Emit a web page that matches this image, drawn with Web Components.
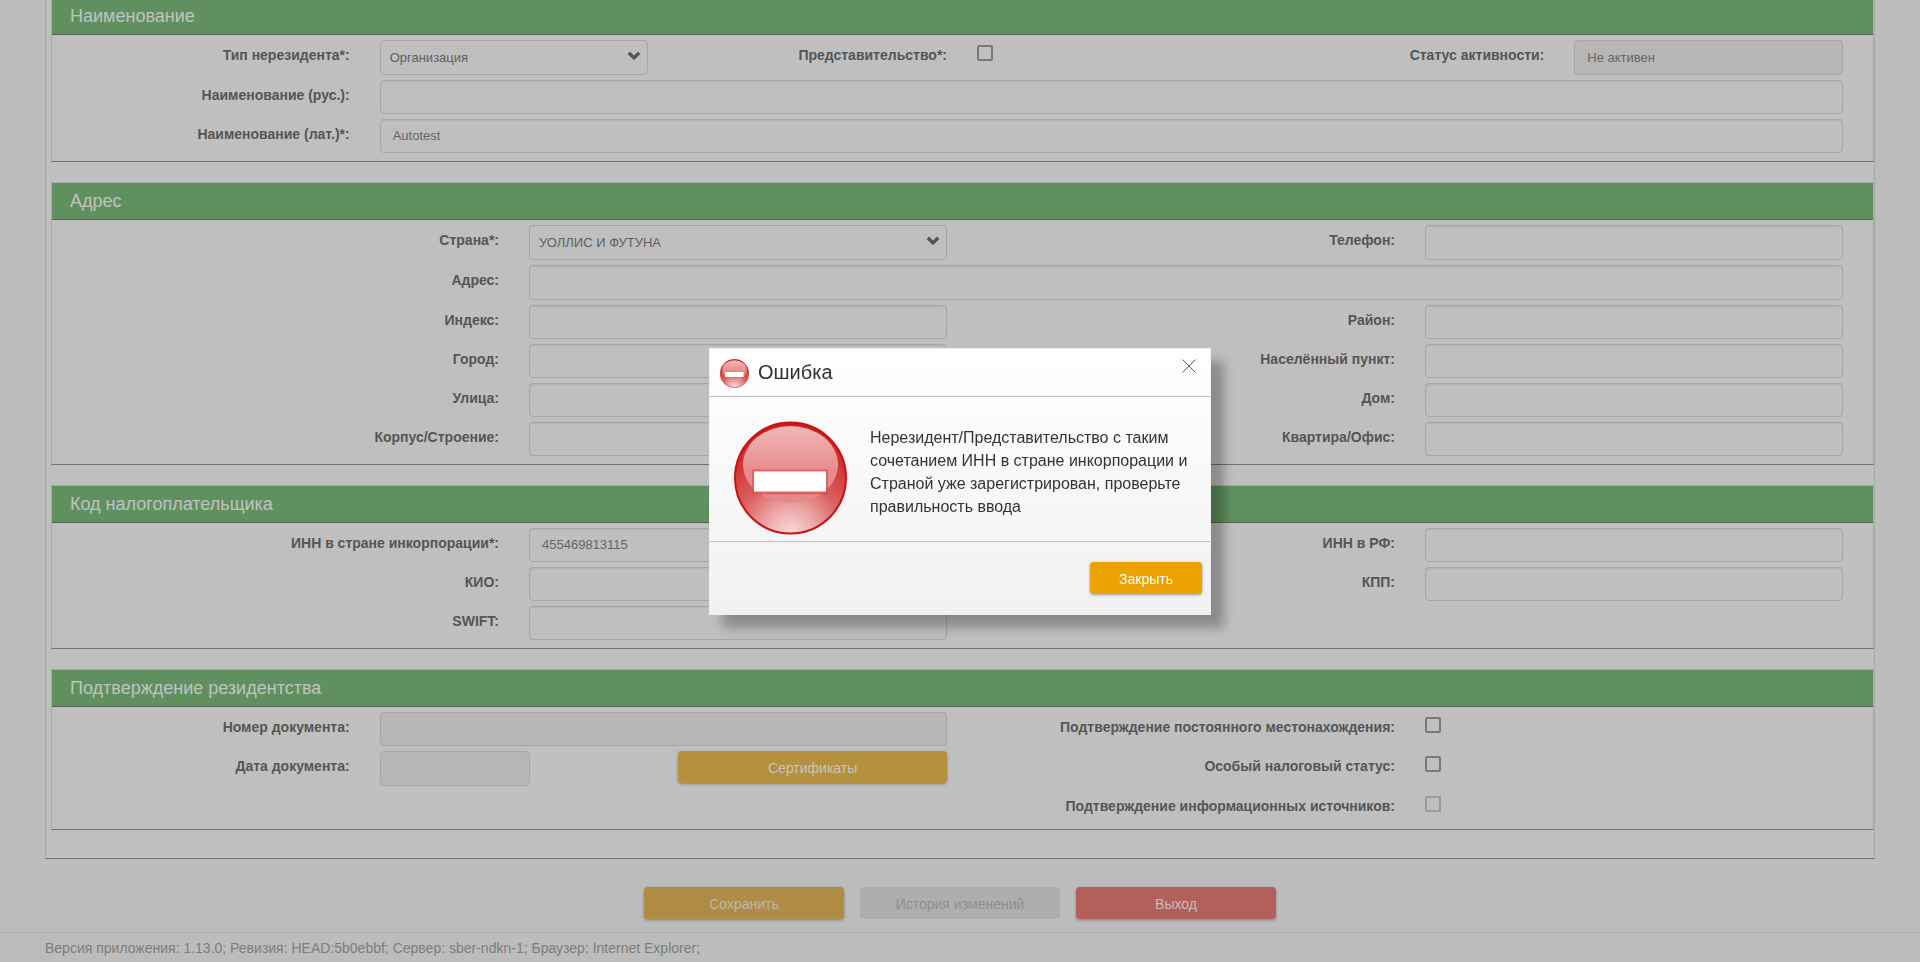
<!DOCTYPE html>
<html lang="ru">
<head>
<meta charset="utf-8">
<title>Карточка нерезидента</title>
<style>
  html, body { margin: 0; min-height: 100%; }
  body {
    background: #bcbcbc; color: #555;
    font: 14px/20px "Liberation Sans", Arial, sans-serif;
    overflow: hidden;
  }
</style>
</head>
<body>
<nr-page>
  <nr-section heading="Наименование">
    <nr-row tall>
      <nr-select label="Тип нерезидента*" value="Организация"></nr-select>
      <nr-check label="Представительство*"></nr-check>
      <nr-input label="Статус активности" value="Не активен" disabled></nr-input>
    </nr-row>
    <nr-row><nr-input label="Наименование (рус.)" span="2 10"></nr-input></nr-row>
    <nr-row><nr-input label="Наименование (лат.)*" span="2 10" value="Autotest"></nr-input></nr-row>
  </nr-section>

  <nr-section heading="Адрес">
    <nr-row tall>
      <nr-select label="Страна*" span="3 3" value="УОЛЛИС И ФУТУНА"></nr-select>
      <nr-input label="Телефон" span="3 3"></nr-input>
    </nr-row>
    <nr-row tall><nr-input label="Адрес" span="3 9"></nr-input></nr-row>
    <nr-row><nr-input label="Индекс" span="3 3"></nr-input><nr-input label="Район" span="3 3"></nr-input></nr-row>
    <nr-row><nr-input label="Город" span="3 3"></nr-input><nr-input label="Населённый пункт" span="3 3"></nr-input></nr-row>
    <nr-row><nr-input label="Улица" span="3 3"></nr-input><nr-input label="Дом" span="3 3"></nr-input></nr-row>
    <nr-row><nr-input label="Корпус/Строение" span="3 3"></nr-input><nr-input label="Квартира/Офис" span="3 3"></nr-input></nr-row>
  </nr-section>

  <nr-section heading="Код налогоплательщика">
    <nr-row><nr-input label="ИНН в стране инкорпорации*" span="3 3" value="455469813115"></nr-input><nr-input label="ИНН в РФ" span="3 3"></nr-input></nr-row>
    <nr-row><nr-input label="КИО" span="3 3"></nr-input><nr-input label="КПП" span="3 3"></nr-input></nr-row>
    <nr-row><nr-input label="SWIFT" span="3 3"></nr-input></nr-row>
  </nr-section>

  <nr-section heading="Подтверждение резидентства">
    <nr-row>
      <nr-input label="Номер документа" span="2 4" disabled></nr-input>
      <nr-check label="Подтверждение постоянного местонахождения" span="3 3"></nr-check>
    </nr-row>
    <nr-row tall>
      <nr-input label="Дата документа" span="2 2" disabled short></nr-input>
      <nr-button kind="certs" style="grid-column: span 2">Сертификаты</nr-button>
      <nr-check label="Особый налоговый статус" span="3 3"></nr-check>
    </nr-row>
    <nr-row low>
      <span style="grid-column: span 6"></span>
      <nr-check label="Подтверждение информационных источников" span="3 3" disabled></nr-check>
    </nr-row>
  </nr-section>

  <nr-button slot="actions" kind="save">Сохранить</nr-button>
  <nr-button slot="actions" kind="history" disabled>История изменений</nr-button>
  <nr-button slot="actions" kind="exit">Выход</nr-button>
  <span slot="footer">Версия приложения: 1.13.0; Ревизия: HEAD:5b0ebbf; Сервер: sber-ndkn-1; Браузер: Internet Explorer;</span>
</nr-page>

<nr-dialog heading="Ошибка">
  Нерезидент/Представительство с таким сочетанием ИНН в стране инкорпорации и Страной уже зарегистрирован, проверьте правильность ввода
  <nr-button slot="buttons" kind="close">Закрыть</nr-button>
</nr-dialog>

<script>
class Base extends HTMLElement {
  connectedCallback() {
    if (this.shadowRoot) return;
    this.attachShadow({ mode: 'open' }).innerHTML =
      '<style>*{box-sizing:border-box}' + this.css() + '</style>' + this.html();
  }
  attr(name) { return this.getAttribute(name) || ''; }
}

customElements.define('nr-page', class extends Base {
  css() { return `
    :host { display: block; }
    main {
      margin: -3px 45px 0; padding: 0 0 28px 5px;
      display: flex; flex-direction: column; gap: 20px;
      background: #bfbfbf; border: solid #a8a8a8; border-width: 0 1px 1px; border-bottom-color: #707070;
    }
    .actions { display: flex; justify-content: center; gap: 16px; margin: 28px 0 13px; }
    ::slotted([slot=actions]) { width: 200px; }
    footer { border-top: 1px solid #a8a8a8; padding: 5px 45px 4px; color: #7d7d7d; }`; }
  html() { return `<main><slot></slot></main>
    <div class="actions"><slot name="actions"></slot></div>
    <footer><slot name="footer"></slot></footer>`; }
});

customElements.define('nr-section', class extends Base {
  css() { return `
    :host { display: block; border: 1px solid #a8a8a8; border-bottom-color: #707070; }
    h2 {
      margin: 0; padding: 0 18px; background: #609060; color: #c0c2c0;
      border-bottom: 1px solid #526552; font-size: 18px; font-weight: 400; line-height: 36px;
    }
    .rows { display: flex; flex-direction: column; gap: 5px; padding: 5px 30px 8px 29px; }`; }
  html() { return `<h2>${this.attr('heading')}</h2><div class="rows"><slot></slot></div>`; }
});

customElements.define('nr-row', class extends Base {
  css() { return `
    :host { display: grid; grid-template-columns: repeat(12, minmax(0, 1fr)); column-gap: 30px; min-height: 34px; }
    :host([tall]) { min-height: 35px; }
    :host([low]) { min-height: 30px; }`; }
  html() { return '<slot></slot>'; }
});

/* A caption and its control, each spanning part of the row's twelve columns. */
class Field extends Base {
  css() {
    const [caption, control] = (this.attr('span') || '2 2').split(' ');
    return `
    :host { display: contents; }
    label { grid-column: span ${caption}; padding-top: 5px; text-align: right; font-weight: 700; white-space: nowrap; }
    .box { grid-column: span ${control}; display: grid; align-items: stretch; }
    input, select {
      width: 100%; margin: 0; padding: 0 12px; color: #666;
      font: 13px/20px "Liberation Sans", Arial, sans-serif;
      background: #bfbfbf; border: 1px solid #a6a6a6; border-radius: 4px; outline: 0;
    }
    input { box-shadow: inset 0 1px 1px #b4b4b4; }
    input:disabled { background: #b6b6b6; opacity: 1; }`;
  }
  html() {
    return `<label for="c">${this.attr('label')}:</label>
      <div class="box">${this.control()}</div>`;
  }
  get off() { return this.hasAttribute('disabled') ? 'disabled' : ''; }
}

customElements.define('nr-input', class extends Field {
  css() { return super.css() + (this.hasAttribute('short') ? 'input { width: 150px; }' : ''); }
  control() { return `<input id="c" type="text" value="${this.attr('value')}" ${this.off}>`; }
});

customElements.define('nr-select', class extends Field {
  css() { return super.css() + `
    select, svg { grid-area: 1 / 1; }
    select { appearance: none; padding: 0 9px; color: #606060; }
    svg { width: 14px; height: 10px; place-self: center end; margin: 0 7px 4px 0; pointer-events: none; }`; }
  control() { return `<select id="c"><option>${this.attr('value')}</option></select>
    <svg viewBox="0 0 14 10"><path d="M3 .6 7 4.400 11 .6 13.400 3 7 9.200.6 3Z" fill="#555"/></svg>`; }
});

customElements.define('nr-check', class extends Field {
  css() { return super.css() + `
    .box { align-items: start; }
    input {
      appearance: none; width: 16px; height: 16px; margin-top: 5px; padding: 0;
      border: 2px solid #787878; border-radius: 2px; box-shadow: none;
    }
    input:disabled { background: #bfbfbf; border-color: #999; }`; }
  control() { return `<input id="c" type="checkbox" ${this.off}>`; }
});

const KINDS = {
  certs:   ['#b5913f', '#c6c4c0', '#808080'],
  save:    ['#af8d47', '#bcb6aa', '#808080'],
  history: ['#aeaeae', '#8e8e8e', 'transparent'],
  exit:    ['#b2605c', '#c8bcbc', '#808080'],
  close:   ['#eca202', '#fff', '#999'],
};
customElements.define('nr-button', class extends Base {
  css() {
    const [back, ink, shade] = KINDS[this.attr('kind')];
    return `
    :host { display: block; }
    button {
      display: block; width: 100%; height: 32px; margin: 0; padding: 2px 12px 0;
      border: 0; border-radius: 4px; background: ${back}; color: ${ink};
      box-shadow: 0 1px 3px ${shade};
      font: 14px/20px "Liberation Sans", Arial, sans-serif;
    }`;
  }
  html() { return `<button type="button" ${this.hasAttribute('disabled') ? 'disabled' : ''}><slot></slot></button>`; }
});

customElements.define('nr-stop-icon', class extends Base {
  css() { return ':host, svg { display: block; width: 100%; height: 100%; }'; }
  html() { return `<svg viewBox="0 0 113 113" aria-hidden="true">
    <defs>
      <radialGradient id="ball" cx=".5" cy="1" r=".95">
        <stop offset="0" stop-color="#f8dada"/><stop offset=".25" stop-color="#eba6a6"/>
        <stop offset=".5" stop-color="#dc6060"/><stop offset=".75" stop-color="#d23c3c"/><stop offset="1" stop-color="#cc1c1c"/>
      </radialGradient>
      <linearGradient id="gloss" x2="0" y2="1">
        <stop offset="0" stop-color="#f1b8b8"/><stop offset=".6" stop-color="#e78a8a"/><stop offset="1" stop-color="#e68888"/>
      </linearGradient>
    </defs>
    <circle cx="56.500" cy="56.500" r="55.500" fill="url(#ball)" stroke="#cc1010" stroke-width="2"/>
    <ellipse cx="56.500" cy="43" rx="47.500" ry="38.500" fill="url(#gloss)"/>
    <path d="M18 48H94V73H18Z" fill="#d94a4a" opacity=".6"/>
    <path d="M20 50H92V70H20Z" fill="#fff"/>
  </svg>`; }
});

customElements.define('nr-dialog', class extends Base {
  css() { return `
    :host { position: fixed; inset: 0; display: flex; align-items: center; justify-content: center; }
    dialog {
      position: static; margin: 0; padding: 0; width: 502px; color: #333;
      border: 1px solid #f0f0f0; background: linear-gradient(#fff, #f1f1f1);
      box-shadow: 13px 13px 10px rgba(0, 0, 0, .27);
    }
    header { display: flex; align-items: center; height: 48px; padding: 0 14px 0 10px; border-bottom: 1px solid #b9bfc6; }
    header nr-stop-icon { width: 29px; height: 29px; margin-top: 2px; }
    h1 { flex: 1; margin: 0 0 0 9px; font-size: 20px; font-weight: 400; line-height: 24px; }
    .x { align-self: flex-start; margin: 10px 0 0; padding: 0; border: 0; background: none; }
    .x svg { display: block; width: 14px; height: 14px; }
    .body { display: flex; gap: 23px; padding: 24px 14px 6px 24px; border-bottom: 1px solid #c2c4c6; }
    .body nr-stop-icon { flex: none; width: 113px; height: 114px; }
    p { margin: 5px 0 0; font-size: 16px; line-height: 23px; }
    .buttons { display: flex; justify-content: flex-end; padding: 20px 8px; }
    ::slotted([slot=buttons]) { width: 112px; }`; }
  html() { return `<dialog open aria-labelledby="t">
    <header><nr-stop-icon></nr-stop-icon><h1 id="t">${this.attr('heading')}</h1>
      <button class="x" type="button" aria-label="Закрыть окно"><svg viewBox="0 0 14 14"><path d="M.5.5 13.500 13.500M13.500.5.5 13.500" stroke="#555" stroke-width="1"/></svg></button>
    </header>
    <div class="body"><nr-stop-icon></nr-stop-icon><p><slot></slot></p></div>
    <div class="buttons"><slot name="buttons"></slot></div>
  </dialog>`; }
});
</script>
</body>
</html>
